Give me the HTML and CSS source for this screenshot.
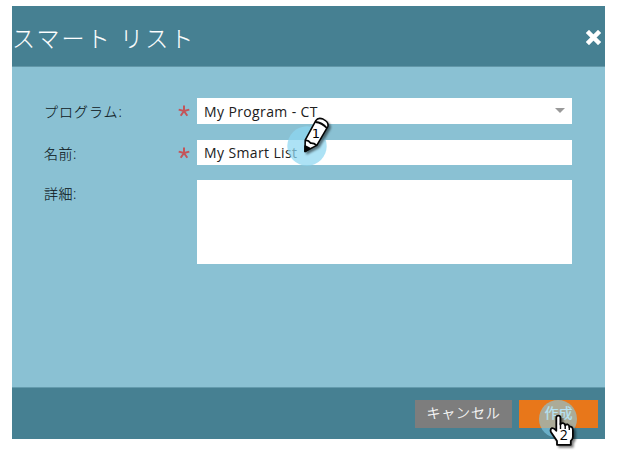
FILE: index.html
```html
<!DOCTYPE html>
<html lang="ja">
<head>
<meta charset="utf-8">
<title>スマート リスト</title>
<link rel="stylesheet" href="styles.css">
</head>
<body>
<main class="dialog">
  <header class="header">
    <h1 class="title">スマート リスト</h1>
    <svg class="close" viewBox="0 0 16 16" width="16" height="16"><path d="M3.2 3.2 12.8 12.8M12.8 3.2 3.2 12.8" stroke="#fff" stroke-width="4.8" stroke-linecap="square" stroke-linejoin="round"/></svg>
  </header>
  <form class="form">
    <div class="row">
      <span class="label kana">プログラム:</span>
      <svg class="star" viewBox="0 0 12 12" width="12" height="12"><path d="M6 6V0.5M6 6 0.7 4.6M6 6 11.3 4.6M6 6 2.7 10.7M6 6 9.3 10.7"/></svg>
      <div class="field select"><span>My Program - CT</span><i class="arrow"></i></div>
    </div>
    <div class="row second">
      <span class="label">名前:</span>
      <svg class="star" viewBox="0 0 12 12" width="12" height="12"><path d="M6 6V0.5M6 6 0.7 4.6M6 6 11.3 4.6M6 6 2.7 10.7M6 6 9.3 10.7"/></svg>
      <div class="field">My Smart List</div>
    </div>
    <div class="row third">
      <span class="label">詳細:</span>
      <div class="field area"></div>
    </div>
  </form>
  <footer class="footer">
    <div class="button cancel">キャンセル</div>
    <div class="button create">作成</div>
  </footer>
</main>
<svg class="marker pencil-marker" viewBox="0 0 60 60" width="60" height="60">
  <circle cx="27" cy="36" r="19.7" fill="#8dd7f1" fill-opacity=".72"/>
  <g class="shadowed" stroke="#050505" stroke-width="1.6" stroke-linejoin="round">
    <path d="M25 41.5 25.2 30.2 35.8 10.7Q38 7 43 9.1Q49.2 12 47.8 16.6L36.8 35.4Z" fill="#fff"/>
    <path d="M25.2 30.2Q29 30.6 30.8 33.2Q34 33 36.6 35.4M35.3 12Q42 12.5 46.8 18" fill="none" stroke-width="1.8"/>
    <path d="M25 41.5 25.1 36 29.6 38.2Z" fill="#050505"/>
  </g>
  <text x="35.8" y="27.6" text-anchor="middle" class="number one">1</text>
</svg>
<svg class="marker hand-marker" viewBox="0 0 60 60" width="60" height="60">
  <circle cx="28" cy="29" r="19" fill="#82cfec" fill-opacity=".6"/>
  <path class="shadowed" d="M26.3 27.5Q26.3 25.7 28.3 25.7Q30.4 25.7 30.4 27.5V34.5Q31 33 33 33.2Q35 33.5 35.2 35.5Q36 34.2 37.8 34.5Q39.3 35 39.3 37Q40.5 36.2 42 37.3Q42.9 38.2 42.9 40V47Q42.9 49 40.8 51V54.8H27V51L20.9 42Q20 39 21.7 38.2Q23.8 37.6 26.3 40.8Z" fill="#fff" stroke="#050505" stroke-width="1.8" stroke-linejoin="round"/>
  <path d="M30.5 33V39M35.2 35V39M39.3 36.5V40" stroke="#050505" stroke-width="1.4" fill="none"/>
  <text x="33.8" y="50.2" text-anchor="middle" class="number">2</text>
</svg>
</body>
</html>
```

FILE: styles.css
```css
* { box-sizing: border-box; }
body {
  margin: 0;
  width: 617px;
  height: 450px;
  padding: 6px 12px;
  background: #fff;
  position: relative;
  overflow: hidden;
  font-family: "Open Sans", "Noto Sans CJK JP", sans-serif;
}
.dialog {
  width: 593px;
  height: 433px;
  display: flex;
  flex-direction: column;
  background: #8ac1d3;
}
.header {
  height: 61px;
  flex: none;
  padding: 3px 4px 0 0;
  display: flex;
  align-items: center;
  justify-content: space-between;
  background: #468092;
  border-bottom: 1px solid #6297a8;
}
.title {
  margin: 0;
  color: #fff;
  font-size: 23px;
  font-weight: 300;
  line-height: 30px;
  letter-spacing: 2.15px;
  white-space: nowrap;
  -webkit-text-stroke: .1px #fff;
}
.close { width: 15px; height: 15px; }
.form {
  flex: 1;
  padding: 31px 33px 0 32px;
}
.row { display: flex; height: 26px; }
.second { height: 25px; margin-top: 16px; }
.third { margin-top: 15px; }
.label {
  width: 134px;
  flex: none;
  color: #10191d;
  font-size: 14px;
  font-weight: 300;
  line-height: 28px;
  letter-spacing: .5px;
  -webkit-text-stroke: .1px #10191d;
}
.kana { letter-spacing: 1px; }
.star {
  flex: none;
  margin: 7px 7px 0 0;
  fill: none;
  stroke: #c45459;
  stroke-width: 2;
}
.field {
  width: 375px;
  height: 26px;
  padding: 0 7px;
  background: #fff;
  color: #202020;
  font-size: 14px;
  line-height: 27px;
  letter-spacing: .38px;
}
.second .field { height: 25px; line-height: 25px; }
.select {
  display: flex;
  align-items: center;
  justify-content: space-between;
}
.arrow {
  border: 5px solid transparent;
  border-top-color: #999;
  border-bottom: 0;
  margin-bottom: 2px;
}
.row .area { height: 84px; margin-left: 19px; }
.footer {
  height: 52px;
  flex: none;
  padding: 12px 7px 0 0;
  display: flex;
  justify-content: flex-end;
  gap: 7px;
  background: #468092;
  border-top: 1px solid #639bad;
}
.button {
  height: 28px;
  color: #fff;
  font-size: 14px;
  font-weight: 300;
  line-height: 26px;
  text-align: center;
  -webkit-text-stroke: .2px #fff;
}
.cancel { width: 97px; background: #7d7d7d; letter-spacing: .8px; }
.create { width: 79px; background: #e8771a; font-weight: 400; }
.marker { position: absolute; }
.pencil-marker { left: 280px; top: 110px; }
.hand-marker { left: 530px; top: 390px; }
.shadowed { filter: drop-shadow(2px 2px 1px rgba(0, 0, 0, .5)); }
.number { font: 14px "Open Sans", sans-serif; fill: #000; }
.one { font-family: "DejaVu Sans", sans-serif; font-size: 13px; }
```
